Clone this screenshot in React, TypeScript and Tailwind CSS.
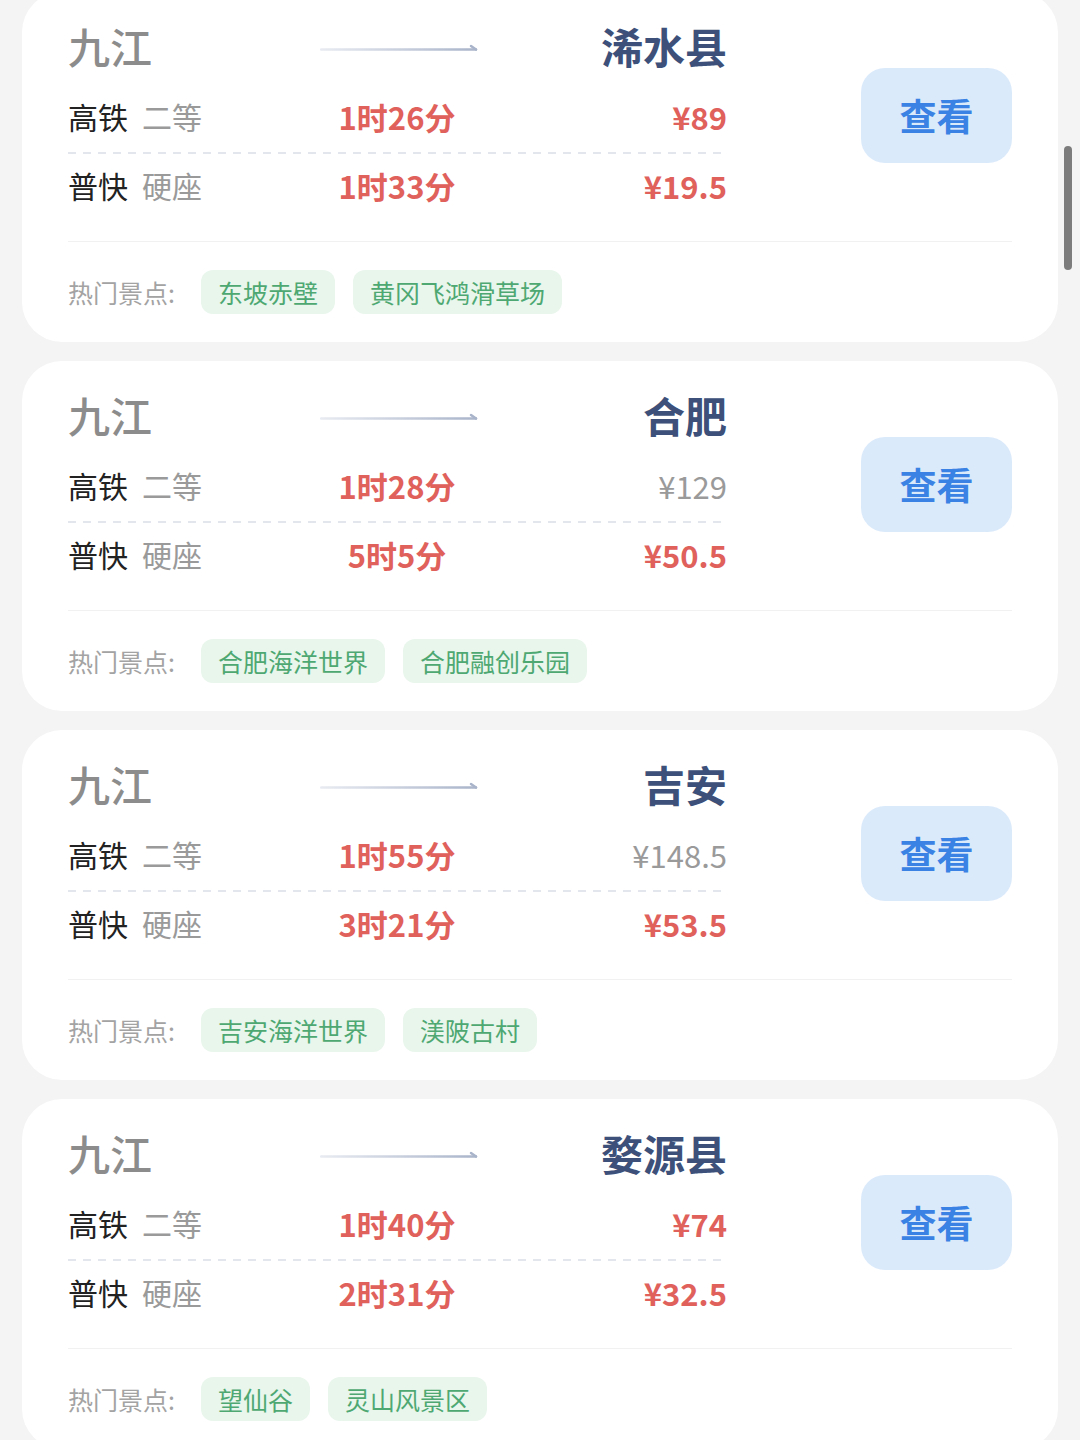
import React from "react";

type Row = { train: string; seat: string; time: string; price: string; dim?: boolean };
type Card = { dest: string; rows: Row[]; tags: string[] };

const cards: Card[] = [
  {
    dest: "浠水县",
    rows: [
      { train: "高铁", seat: "二等", time: "1时26分", price: "¥89" },
      { train: "普快", seat: "硬座", time: "1时33分", price: "¥19.5" },
    ],
    tags: ["东坡赤壁", "黄冈飞鸿滑草场"],
  },
  {
    dest: "合肥",
    rows: [
      { train: "高铁", seat: "二等", time: "1时28分", price: "¥129", dim: true },
      { train: "普快", seat: "硬座", time: "5时5分", price: "¥50.5" },
    ],
    tags: ["合肥海洋世界", "合肥融创乐园"],
  },
  {
    dest: "吉安",
    rows: [
      { train: "高铁", seat: "二等", time: "1时55分", price: "¥148.5", dim: true },
      { train: "普快", seat: "硬座", time: "3时21分", price: "¥53.5" },
    ],
    tags: ["吉安海洋世界", "渼陂古村"],
  },
  {
    dest: "婺源县",
    rows: [
      { train: "高铁", seat: "二等", time: "1时40分", price: "¥74" },
      { train: "普快", seat: "硬座", time: "2时31分", price: "¥32.5" },
    ],
    tags: ["望仙谷", "灵山风景区"],
  },
];

const font = { fontFamily: '"Noto Sans CJK SC", "Noto Sans", sans-serif' };

function Arrow() {
  return (
    <svg width="158" height="12" viewBox="0 0 158 12" className="block">
      <defs>
        <linearGradient id="ag" gradientUnits="userSpaceOnUse" x1="0" y1="0" x2="158" y2="0">
          <stop offset="0" stopColor="#e8ebf1" />
          <stop offset="1" stopColor="#a9b4ca" />
        </linearGradient>
      </defs>
      <path d="M1 8.5 H156" stroke="url(#ag)" strokeWidth="2.5" strokeLinecap="round" fill="none" />
      <path d="M151 5 L156 8.5" stroke="#a9b4ca" strokeWidth="2.5" strokeLinecap="round" fill="none" />
    </svg>
  );
}

function TicketRow({ r, tall }: { r: Row; tall?: boolean }) {
  return (
    <div className={"flex items-center " + (tall ? "h-[72px]" : "h-[62px]")}>
      <div className="w-[200px] text-[30px] leading-none whitespace-nowrap">
        <span className="text-[#222222]">{r.train}</span>
        <span className="ml-[14px] text-[#9a9a9a]">{r.seat}</span>
      </div>
      <div className="w-[258px] text-center text-[31px] font-bold leading-none text-[#e0605c]">{r.time}</div>
      <div
        className={
          "flex-1 text-right text-[31px] leading-none " +
          (r.dim ? "text-[#9a9a9a] font-normal" : "text-[#e0605c] font-bold")
        }
      >
        {r.price}
      </div>
    </div>
  );
}

function TicketCard({ c }: { c: Card }) {
  return (
    <div className="h-[350px] rounded-[40px] bg-white px-[46px] pt-[26px]">
      <div className="flex items-start">
        <div className="w-[659px]">
          <div className="flex h-[56px] items-center">
            <div className="w-[252px] text-[42px] font-medium leading-none text-[#8c8c8c]">九江</div>
            <div className="pt-[2px]">
              <Arrow />
            </div>
            <div className="flex-1 text-right text-[42px] font-bold leading-none text-[#3c5079]">{c.dest}</div>
          </div>
          <div className="mt-[6px]">
            <TicketRow r={c.rows[0]} tall />
            <div className="h-[2px] bg-[repeating-linear-gradient(to_right,#e3e6ec_0px,#e3e6ec_8px,transparent_8px,transparent_15px)]" />
            <TicketRow r={c.rows[1]} />
          </div>
        </div>
        <div className="flex-1" />
        <div className="mt-[50px] flex h-[95px] w-[151px] items-center justify-center rounded-[24px] bg-[#dbeafb] text-[37px] font-bold text-[#3a82e3]">
          查看
        </div>
      </div>
      <div className="mt-[25px] border-t border-[#f1f1f1]" />
      <div className="mt-[28px] flex items-center">
        <div className="mr-[26px] text-[25px] leading-none text-[#a3a3a3]">热门景点:</div>
        <div className="flex gap-[18px]">
          {c.tags.map((t) => (
            <div
              key={t}
              className="flex h-[44px] items-center rounded-[12px] bg-[#e8f6ec] px-[17px] text-[25px] leading-none text-[#4ea872]"
            >
              {t}
            </div>
          ))}
        </div>
      </div>
    </div>
  );
}

export default function App() {
  return (
    <div className="relative h-[1440px] w-[1080px] overflow-hidden bg-[#f4f4f4]" style={font}>
      <div className="mt-[-8px] flex flex-col gap-[19px] px-[22px]">
        {cards.map((c) => (
          <TicketCard key={c.dest} c={c} />
        ))}
      </div>
      <div className="absolute left-[1064px] top-[146px] h-[124px] w-[8px] rounded-full bg-[#7c7c7c]" />
    </div>
  );
}
